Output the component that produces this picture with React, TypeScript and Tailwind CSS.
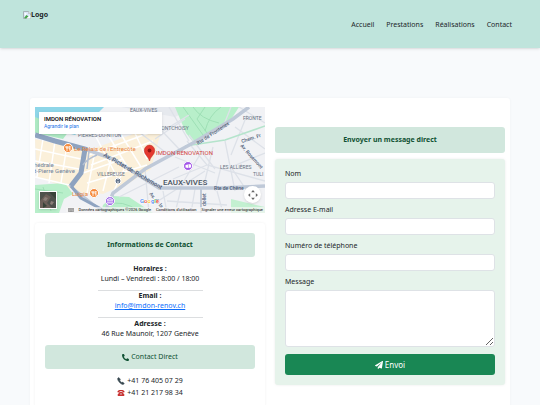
import { FaPaperPlane, FaPhoneAlt } from 'react-icons/fa';

const NAV_LINKS = ['Accueil', 'Prestations', 'Réalisations', 'Contact'];

const FIELDS = [
  { id: 'nom', label: 'Nom', type: 'text' },
  { id: 'email', label: 'Adresse E-mail', type: 'email' },
  { id: 'telephone', label: 'Numéro de téléphone', type: 'tel' },
];

const INPUT_CLASS =
  'block w-full rounded-[3px] border border-[#dee2e6] bg-white px-1 outline-none focus:border-[#198754]';

function BrokenImage() {
  return (
    <svg viewBox="0 0 16 16" className="size-2" aria-hidden="true">
      <path d="M1 1h10l4 4v10H1z" fill="#dbe7f7" stroke="#9aa0a6" strokeWidth="1.5" />
      <path d="M11 1v4h4" fill="#fff" stroke="#9aa0a6" />
      <circle cx="5" cy="6" r="2" fill="#fff" />
      <path d="M2 14l5-6 4 3-5 4z" fill="#45a346" />
      <path d="M7 15l8-7v7z" fill="#fff" />
    </svg>
  );
}

function Handset() {
  return (
    <svg viewBox="0 0 16 16" className="size-2" aria-hidden="true">
      <path
        d="M3 1L1.2 3.2C.8 6.8 6.6 14.4 12 15l2.6-1.5-2.9-3.4-2.2 1.1C7.6 10 6 8 5.3 6L7 4.300z"
        fill="#37474f"
        stroke="#37474f"
        strokeLinejoin="round"
      />
    </svg>
  );
}

function RedTelephone() {
  return (
    <svg viewBox="0 0 16 16" className="size-2" aria-hidden="true">
      <path d="M1 6.500C0 3 4 2 8 2s8 1 7 4.500l-3.500.5-.8-2.300H5.300L4.500 7z" fill="#c62828" />
      <path d="M5.300 6h5.400l3.800 5v3h-13v-3z" fill="#c93434" />
      <circle cx="8" cy="10" r="2.200" fill="#e3b4b4" />
      <circle cx="8" cy="10" r="1.200" fill="#a52020" />
    </svg>
  );
}

function MapDrawing() {
  return (
    <svg
      viewBox="0 0 230 106"
      preserveAspectRatio="xMidYMid slice"
      className="block h-[106px] w-full font-['Roboto','Liberation_Sans',sans-serif]"
      role="img"
      aria-label="Plan du quartier des Eaux-Vives"
    >
      <rect width="230" height="106" fill="#f1f2f5" />
      {/* built-up blocks */}
      <path d="M0 32l52 12 60-22 14 2-10 38-28 18-34 8-52-18z" fill="#fbf0da" />
      <path d="M58 53l36 22-26 12-24-4z" fill="#fbf0da" />
      {/* lake and parks */}
      <path d="M0 0h69l-9 9L40 28 0 18z" fill="#8fd6e8" />
      <path d="M0 10l34 14-6 8L0 26z" fill="#aeeac4" />
      <path d="M86 0h79l-5 0-20 10z" fill="#e6e9ee" />
      <path d="M140 0h64l-9 14-37 21-7-9z" fill="#b8efca" />
      <path d="M0 78l30-2 8 11-9 5-5 14H0z" fill="#b8efca" />
      <path d="M68 98l10-9 16 1 15 10 9 6H66z" fill="#b8efca" />
      <path d="M196 92l34 8v6h-34z" fill="#c3f0d1" />
      <g fill="none" stroke="#98dcb0" strokeWidth="0.8">
        <path d="M148 0l20 28M158 0q8 12 26 16M170 0l-8 12 10 14M186 0q-12 8-16 24" />
        <path d="M0 82l28 4M8 80l8 24M74 98q12-6 30 6" />
      </g>
      {/* streets */}
      <g fill="none" stroke="#fff" strokeWidth="1.5">
        <path d="M0 42l46 10M0 54l44 8M8 32L2 70M20 34l-6 42M32 38l-6 38M0 70l34 8" />
        <path d="M54 48l60-22M56 58l62-24M72 26l24 40M84 24l22 36M98 22l14 30M60 28l22 42M48 66l40-14" />
        <path d="M52 76l60-18M60 44L52 86M76 52l-8 32M90 60l-12 26" />
      </g>
      <g fill="none" stroke="#dde1e8" strokeWidth="1.3">
        <path d="M100 22l34 26M112 8l32 34M128 24l26-16M120 32l30-20M134 0l20 34M96 0l30 24" />
        <path d="M152 34l20 24 58 16M166 46l-22 36M178 40l-10 42M172 58l-34 14M190 34l10 50" />
        <path d="M200 20l30 22M204 0l26 16M212 8l-16 40M230 46l-34 14 16 24M186 60l-6 24" />
        <path d="M128 84l4 22M146 82l-6 24M160 82l-4 24M182 84l6 22M132 94l60 4M110 62l4 44M84 90l60-30" />
        <path d="M120 96l50-32M140 50l40 16M154 28l26 34M196 0l-8 20" />
      </g>
      <path d="M150 39l40-6 40-14" fill="none" stroke="#b5e4cc" strokeWidth="1.5" />
      <g fill="none" stroke="#bfc9d8" strokeWidth="3.500">
        <path d="M70 106l8-20 32-24 48-26 40-24 16-12" />
        <path d="M50 42l28 10 30 19 16 10h62l44-2" />
        <path d="M34 78l36 28M166 82v24" strokeWidth="2" />
      </g>
      <g fill="none" stroke="#8ea3c0" strokeWidth="5">
        <path d="M0 28l20 6 30 8-4 24-10 13" />
        <path d="M36 79l10 12 22 12" strokeWidth="3" />
      </g>
      <path d="M54 44l-2 18M62 48q-10 4-14 10" fill="none" stroke="#b3bfd2" strokeWidth="1.5" />

      {/* district names */}
      <g fill="#667080" fontSize="5">
        <text x="95" y="5">EAUX-VIVES</text>
        <text x="43" y="30">PIERRES-DU-NITON</text>
        <text x="122" y="23">MONTCHOISY</text>
        <text x="208" y="13">FRONTE</text>
        <text x="62" y="69">VILLEREUSE</text>
        <text x="185" y="62">LES ALLIÈRES</text>
        <text x="218" y="69">TULI</text>
      </g>
      <text x="128" y="78" fill="#4b5563" fontSize="8" fontWeight="500">
        EAUX-VIVES
      </text>
      {/* street names */}
      <g fill="#4c5b75" fontSize="5" fontWeight="500">
        <text transform="translate(163 38) rotate(-33)">Rte de Frontenex</text>
        <text transform="translate(68 49) rotate(30)" fontSize="6">Av. Pictet-de-Rochemont</text>
        <text x="179" y="83">Rte de Chêne</text>
        <text transform="translate(207 36) rotate(-18)">Chem. Fr</text>
        <text transform="translate(205 39) rotate(48)">Av. Rosemont</text>
        <text transform="translate(171 99) rotate(-90)">dollet</text>
        <text transform="translate(114 87) rotate(50)">Av. de la</text>
      </g>
      <g fill="#71839c" fontSize="6">
        <text x="-1" y="60">hédrale</text>
        <text x="-4" y="66">nt-Pierre Genève</text>
      </g>
      <g fill="#e8843c" fontSize="6">
        <text x="39" y="44">Le Relais de l'Entrecôte</text>
        <text x="37" y="89">Luigia</text>
      </g>
      <text x="121" y="48" fill="#d3463f" fontSize="6">
        IMDON RÉNOVATION
      </text>

      {/* points of interest */}
      <g stroke="#fff" strokeWidth="1">
        <circle cx="33" cy="41" r="4.500" fill="#f58a3c" />
        <circle cx="59" cy="86" r="4.500" fill="#f58a3c" />
        <circle cx="153" cy="59" r="4.500" fill="#a458e8" />
        <circle cx="75" cy="94" r="4.500" fill="#9b63e6" />
        <circle cx="83" cy="74" r="3" fill="#65758c" />
      </g>
      <g fill="none" stroke="#fff" strokeWidth="0.800">
        <path d="M31 39v2h2v-2M32 39v5M35 44v-5q-1 1-1 3h1" />
        <path d="M57 84v2h2v-2M58 84v5M61 89v-5q-1 1-1 3h1" />
        <path d="M72 93l3-2 3 2zM73 93v3M75 93v3M77 93v3M72 96h6" />
        <path d="M83 72v1M83 74v2" />
      </g>
      <path d="M150.500 58l2.500-.5v3.500l-2.500-.5zM153.500 57l2.500.5v3l-2.500.5z" fill="#fff" />
      <path
        d="M114.500 54c-.8-4.500-5.200-6-5.200-10.500a5.200 5.400 0 0 1 10.400 0c0 4.500-4.400 6-5.200 10.500z"
        fill="#e5392f"
        stroke="#b8221c"
        strokeWidth="0.500"
      />
      <circle cx="114.500" cy="43.500" r="1.900" fill="#8e1612" />
      <text x="105" y="96" fontSize="6" fontWeight="500" stroke="#fff" strokeWidth="1" paintOrder="stroke">
        <tspan fill="#4285f4">G</tspan>
        <tspan fill="#ea4335">o</tspan>
        <tspan fill="#fbbc05">o</tspan>
        <tspan fill="#4285f4">g</tspan>
        <tspan fill="#34a853">l</tspan>
        <tspan fill="#ea4335">e</tspan>
      </text>
    </svg>
  );
}

function GoogleMap() {
  return (
    <div className="relative overflow-hidden font-['Roboto','Liberation_Sans',sans-serif]">
      <MapDrawing />
      <div className="absolute top-[5px] left-1 w-[123px] bg-white px-[5px] pt-[3px] pb-1 shadow-sm">
        <div className="text-[6px] leading-[8px] font-medium text-black">IMDON RÉNOVATION</div>
        <a href="#plan" className="block text-[5px] leading-[7px] text-[#1a73e8]">
          Agrandir le plan
        </a>
      </div>
      <button
        type="button"
        aria-label="Afficher les images satellite"
        className="absolute bottom-1 left-1 size-[18px] border border-white bg-[#50504a] shadow"
      >
        <svg viewBox="0 0 16 16" className="block size-full" aria-hidden="true">
          <rect width="16" height="16" fill="#4d514b" />
          <path d="M0 9l6-7 5 3-4 6 5 5H0z" fill="#6b5f58" />
          <path d="M9 0l7 7v-7zM3 10l4 4-4 2z" fill="#384338" />
          <path d="M5 5l3 1-2 3-3-1zM11 9l3 1-2 3-2-1z" fill="#8a7f78" />
        </svg>
      </button>
      <button
        type="button"
        aria-label="Commandes de la caméra"
        className="absolute right-1 bottom-[10px] flex size-[17px] items-center justify-center rounded-full bg-white shadow"
      >
        <svg viewBox="0 0 16 16" className="size-[10px]" fill="#666" aria-hidden="true">
          <path d="M8 0l3 3.500H5zM8 16l3-3.500H5zM0 8l3.500-3v6zM16 8l-3.500-3v6z" />
        </svg>
      </button>
      <div className="absolute right-0 bottom-0 flex items-center gap-[5px] bg-[#f5f5f5]/70 px-[2px] text-[4px] leading-[6px] whitespace-nowrap text-black">
        <svg viewBox="0 0 14 9" className="h-1 w-[6px]" aria-hidden="true">
          <rect x="0.500" y="0.500" width="13" height="8" rx="1" fill="#ddd" stroke="#333" />
          <path d="M2 3h10M2 5h10M4 7h6" stroke="#333" strokeDasharray="1.500 .7" />
        </svg>
        <span>Données cartographiques ©2026 Google</span>
        <a href="#conditions">Conditions d'utilisation</a>
        <a href="#erreur">Signaler une erreur cartographique</a>
      </div>
    </div>
  );
}

function Header() {
  return (
    <header className="flex h-12 items-start justify-between bg-[#bfe4dc] pr-7 pl-[23px] shadow">
      <a href="#accueil" className="mt-[10px] flex items-center text-[7px] leading-[10px] font-bold">
        <BrokenImage />
        Logo
      </a>
      <nav className="mt-5 flex gap-3 text-[7px] leading-[9px]">
        {NAV_LINKS.map((link) => (
          <a key={link} href={`#${link.toLowerCase()}`}>
            {link}
          </a>
        ))}
      </nav>
    </header>
  );
}

function ContactInfo() {
  return (
    <section className="rounded-[3px] bg-white p-[10px] text-center leading-[10px] shadow-[0_0_3px_rgba(0,0,0,0.06)]">
      <h2 className="rounded-[3px] bg-[#d1e7dd] py-[7px] font-bold text-[#0f5132]">
        Informations de Contact
      </h2>
      <div className="pt-[7px]">
        <p className="font-bold">Horaires :</p>
        <p>Lundi – Vendredi : 8:00 / 18:00</p>
      </div>
      <hr className="mx-auto mt-[6px] w-1/2 border-[#dcdee0]" />
      <p className="font-bold">Email :</p>
      <p>
        <a href="mailto:info@imdon-renov.ch" className="text-[#0d6efd] underline">
          info@imdon-renov.ch
        </a>
      </p>
      <hr className="mx-auto mt-[6px] mb-px w-1/2 border-[#dcdee0]" />
      <p className="font-bold">Adresse :</p>
      <p>46 Rue Maunoir, 1207 Genève</p>
      <h3 className="mt-[6px] flex items-center justify-center gap-[2px] rounded-[3px] bg-[#d1e7dd] py-[7px] text-[#0f5132]">
        <FaPhoneAlt className="size-[7px]" />
        Contact Direct
      </h3>
      <div className="mt-[7px] flex flex-col items-center gap-[2px]">
        <p className="flex items-center gap-[2px]">
          <Handset />
          +41 76 405 07 29
        </p>
        <p className="flex items-center gap-[2px]">
          <RedTelephone />
          +41 21 217 98 34
        </p>
      </div>
    </section>
  );
}

function ContactForm() {
  return (
    <section className="mt-5 leading-[10px]">
      <h2 className="rounded-[3px] bg-[#d1e7dd] py-2 text-center font-bold text-[#0f5132]">
        Envoyer un message direct
      </h2>
      <form
        className="mt-[6px] rounded-[3px] bg-[#e6f3eb] p-[10px] shadow-[0_0_3px_rgba(0,0,0,0.08)]"
        onSubmit={(e) => e.preventDefault()}
      >
        {FIELDS.map((field) => (
          <div key={field.id} className="mb-[6px]">
            <label htmlFor={field.id} className="mb-[3px] block">
              {field.label}
            </label>
            <input id={field.id} type={field.type} className={`${INPUT_CLASS} h-[17px]`} />
          </div>
        ))}
        <label htmlFor="message" className="mb-[3px] block">
          Message
        </label>
        <textarea id="message" className={`${INPUT_CLASS} h-[57px] resize-y`} />
        <button
          type="submit"
          className="mt-[7px] flex w-full items-center justify-center gap-[2px] rounded-[3px] bg-[#198754] py-1 text-[8px] leading-[13px] text-white"
        >
          <FaPaperPlane className="size-2" />
          Envoi
        </button>
      </form>
    </section>
  );
}

export default function App() {
  return (
    <div className="min-h-screen bg-[#f8fafc] font-['Noto_Sans','Liberation_Sans',sans-serif] text-[7px] text-[#212529]">
      <Header />
      <main className="px-[30px] pt-[50px]">
        <div className="grid grid-cols-2 gap-[10px] rounded-[3px] bg-white px-[5px] pt-[9px] pb-5 shadow-[0_0_3px_rgba(0,0,0,0.04)]">
          <div className="flex flex-col gap-[10px]">
            <GoogleMap />
            <ContactInfo />
          </div>
          <ContactForm />
        </div>
      </main>
    </div>
  );
}
